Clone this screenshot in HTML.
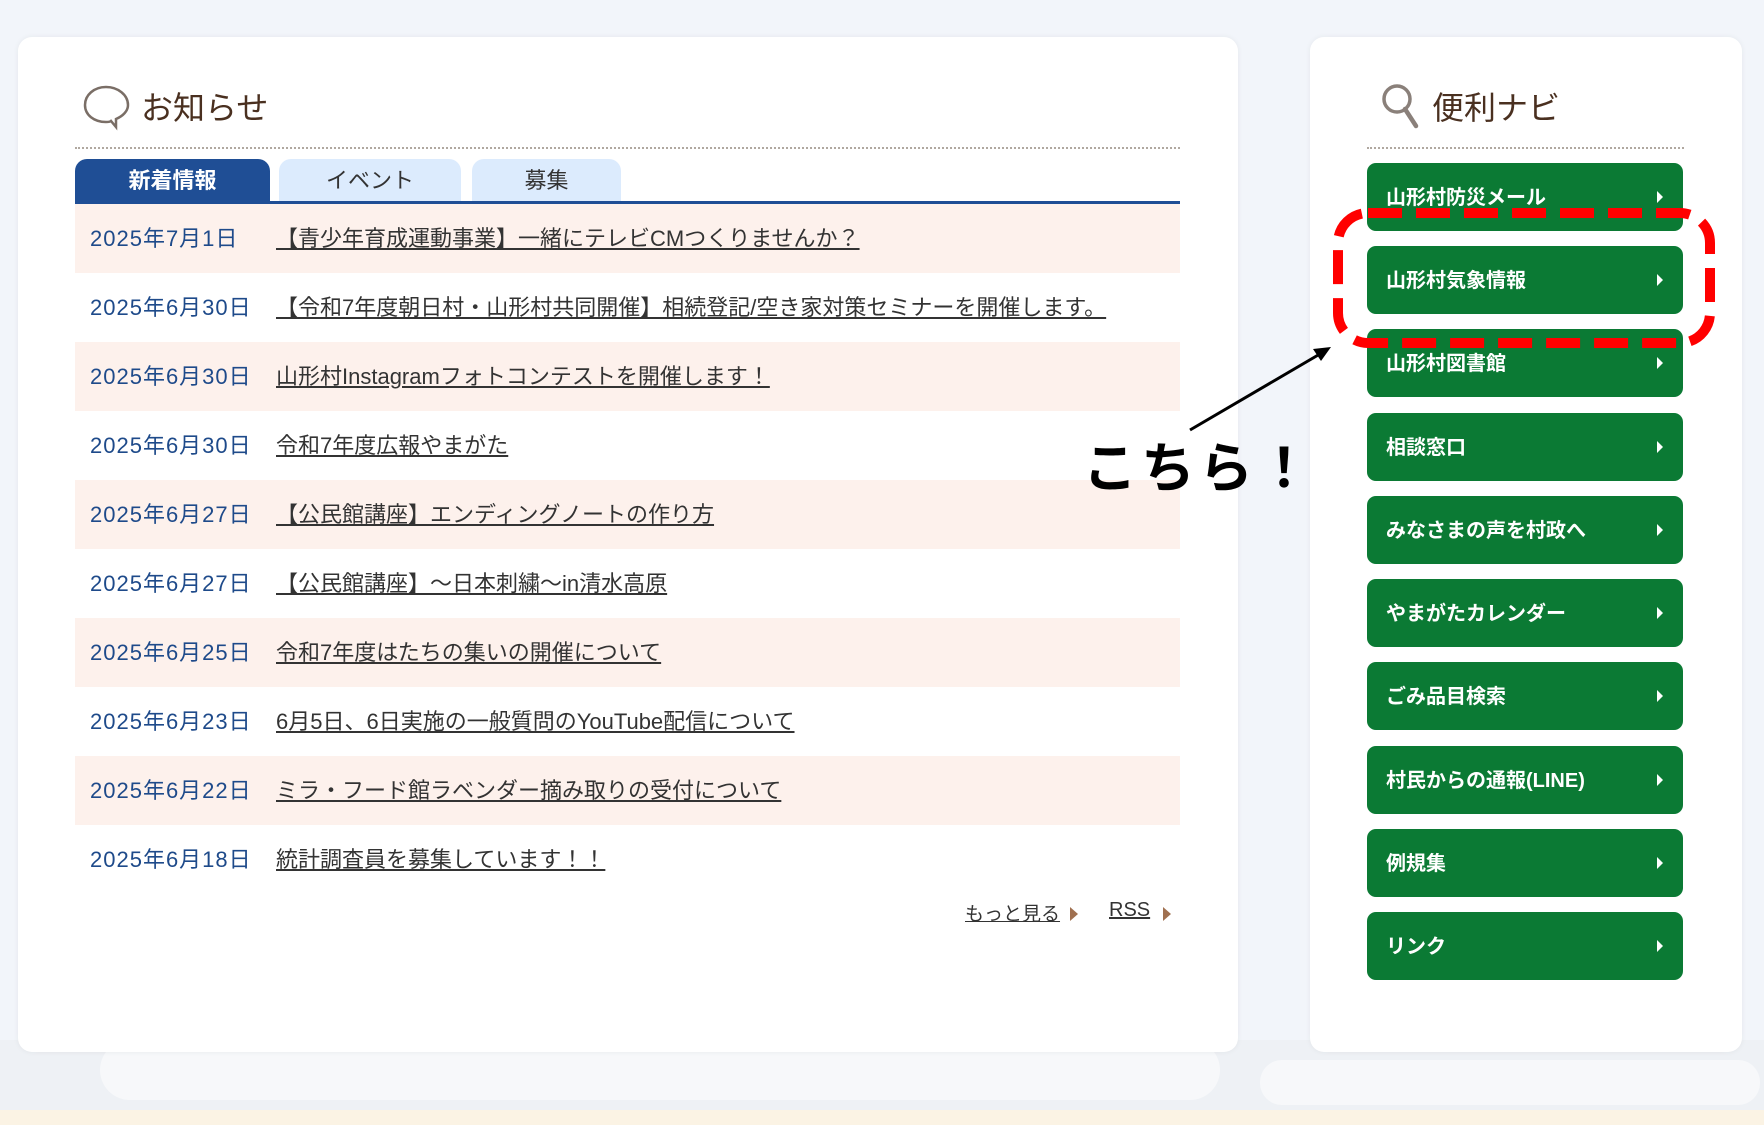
<!DOCTYPE html>
<html><head><meta charset="utf-8"><style>
body{margin:0;width:1764px;height:1125px;background:#f2f5fa;position:relative;overflow:hidden;font-family:"Liberation Sans","Noto Sans CJK JP",sans-serif}
.panel{position:absolute;background:#fff;border-radius:14px;box-shadow:0 0 6px rgba(0,0,0,.06)}
.h{position:absolute;font-size:32px;color:#4a3020}
.dot{position:absolute;border-top:2px dotted #b0a8a0}
.tab{position:absolute;top:159px;height:43px;border-radius:12px 12px 0 0;background:#dcebfd;color:#333;font-size:22px;text-align:center;line-height:44px}
.row{position:absolute;left:75px;width:1105px;height:69px;font-size:22px;line-height:69px;white-space:nowrap}
.row:nth-child(odd){background:#fdf1ec}
.row .d{position:absolute;left:15px;color:#1e4a8a;letter-spacing:1px}
.row .t{position:absolute;left:201px;color:#333;text-decoration:underline}
.btn{position:absolute;left:1367px;width:316px;height:68px;border-radius:9px;background:#0b7a34;color:#fff;font-size:20px;font-weight:bold;line-height:70px;box-sizing:border-box;padding-left:19px}
.btn:after{content:"";position:absolute;right:20px;top:28px;border-left:6px solid #fff;border-top:6px solid transparent;border-bottom:6px solid transparent}
</style></head><body>
<div style="position:absolute;left:0;top:1040px;width:1764px;height:85px;background:#eef1f5"></div>
<div style="position:absolute;left:100px;top:1040px;width:1120px;height:60px;border-radius:30px;background:#f7f8fa"></div>
<div style="position:absolute;left:1260px;top:1060px;width:500px;height:45px;border-radius:22px;background:#f7f8fa"></div>
<div style="position:absolute;left:0;top:1110px;width:1764px;height:15px;background:#fbf3e4"></div>
<div class="panel" style="left:18px;top:37px;width:1220px;height:1015px"></div>
<div class="panel" style="left:1310px;top:37px;width:432px;height:1015px"></div>

<svg style="position:absolute;left:82px;top:84px" width="50" height="48"><path d="M24 3C12 3 3 11 3 21c0 10 9 17 21 17 2 0 4 0 5-1l5 6v-8c7-3 12-8 12-14C46 11 36 3 24 3z" fill="none" stroke="#7a6e66" stroke-width="2.5"/></svg>
<div class="h" style="left:141px;top:83px">お知らせ</div>
<div class="dot" style="left:75px;top:147px;width:1105px"></div>
<div class="tab" style="left:75px;width:195px;background:#1f4e95;color:#fff;font-weight:bold">新着情報</div>
<div class="tab" style="left:279px;width:182px">イベント</div>
<div class="tab" style="left:472px;width:149px">募集</div>
<div style="position:absolute;left:75px;top:201px;width:1105px;height:3px;background:#1f4e95"></div>
<div style="position:absolute;left:0;top:204px">
<div class="row" style="top:0"><span class="d">2025年7月1日</span><span class="t">【青少年育成運動事業】一緒にテレビCMつくりませんか？</span></div>
<div class="row" style="top:69px"><span class="d">2025年6月30日</span><span class="t">【令和7年度朝日村・山形村共同開催】相続登記/空き家対策セミナーを開催します。</span></div>
<div class="row" style="top:138px"><span class="d">2025年6月30日</span><span class="t">山形村Instagramフォトコンテストを開催します！</span></div>
<div class="row" style="top:207px"><span class="d">2025年6月30日</span><span class="t">令和7年度広報やまがた</span></div>
<div class="row" style="top:276px"><span class="d">2025年6月27日</span><span class="t">【公民館講座】エンディングノートの作り方</span></div>
<div class="row" style="top:345px"><span class="d">2025年6月27日</span><span class="t">【公民館講座】～日本刺繍～in清水高原</span></div>
<div class="row" style="top:414px"><span class="d">2025年6月25日</span><span class="t">令和7年度はたちの集いの開催について</span></div>
<div class="row" style="top:483px"><span class="d">2025年6月23日</span><span class="t">6月5日、6日実施の一般質問のYouTube配信について</span></div>
<div class="row" style="top:552px"><span class="d">2025年6月22日</span><span class="t">ミラ・フード館ラベンダー摘み取りの受付について</span></div>
<div class="row" style="top:621px"><span class="d">2025年6月18日</span><span class="t">統計調査員を募集しています！！</span></div>
</div>
<div style="position:absolute;left:965px;top:899px;font-size:19px;color:#333;text-decoration:underline">もっと見る</div>
<div style="position:absolute;left:1070px;top:907px;border-left:8px solid #a07050;border-top:7px solid transparent;border-bottom:7px solid transparent"></div>
<div style="position:absolute;left:1109px;top:899px;font-size:20px;color:#333;text-decoration:underline">RSS</div>
<div style="position:absolute;left:1163px;top:907px;border-left:8px solid #a07050;border-top:7px solid transparent;border-bottom:7px solid transparent"></div>

<svg style="position:absolute;left:1380px;top:81px" width="40" height="50"><circle cx="17" cy="18" r="13" fill="none" stroke="#8a807a" stroke-width="3.5"/><path d="M25 28l11 17" stroke="#8a807a" stroke-width="4.5" stroke-linecap="round"/></svg>
<div class="h" style="left:1432px;top:83px">便利ナビ</div>
<div class="dot" style="left:1367px;top:147px;width:317px"></div>
<div class="btn" style="top:163px">山形村防災メール</div>
<div class="btn" style="top:246px">山形村気象情報</div>
<div class="btn" style="top:329px">山形村図書館</div>
<div class="btn" style="top:413px">相談窓口</div>
<div class="btn" style="top:496px">みなさまの声を村政へ</div>
<div class="btn" style="top:579px">やまがたカレンダー</div>
<div class="btn" style="top:662px">ごみ品目検索</div>
<div class="btn" style="top:746px">村民からの通報(LINE)</div>
<div class="btn" style="top:829px">例規集</div>
<div class="btn" style="top:912px">リンク</div>

<svg style="position:absolute;left:0;top:0" width="1764" height="1125">
<rect x="1338" y="213" width="372" height="130" rx="30" fill="none" stroke="#f00" stroke-width="10" stroke-dasharray="34 14"/>
<path d="M1190 430L1325 351" stroke="#000" stroke-width="3"/>
<path d="M1331 347l-18 2 8 12z" fill="#000"/>
</svg>
<div style="position:absolute;left:1083px;top:424px;font-size:54px;font-weight:bold;color:#000;letter-spacing:4px">こちら！</div>
</body></html>
